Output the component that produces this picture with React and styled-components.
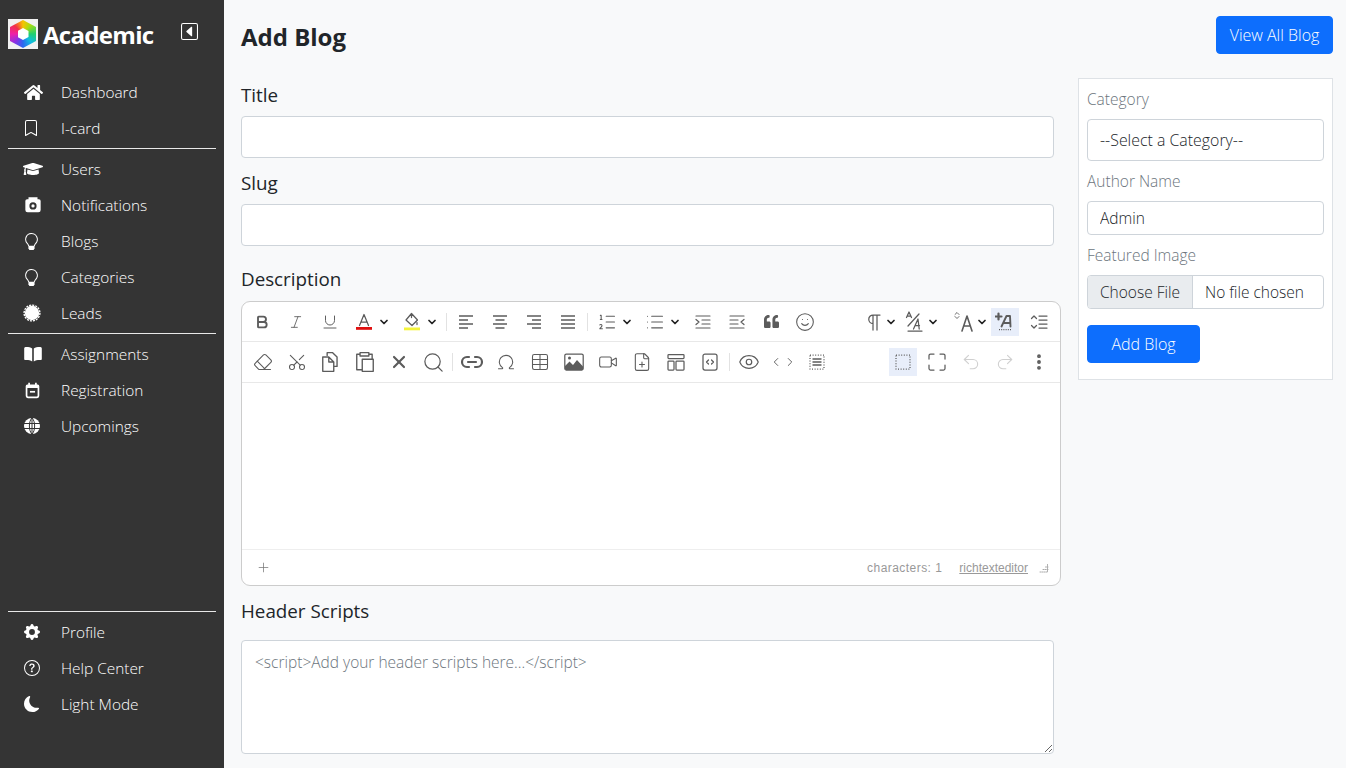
import React from "react";
import styled, { createGlobalStyle } from "styled-components";
import { BsBookmark, BsLightbulb, BsGearFill, BsQuestionCircle, BsMoonFill, BsCaretLeftSquare } from "react-icons/bs";
import { FaGraduationCap, FaQuoteLeft, FaHome } from "react-icons/fa";
import {
  Bold, Italic, Underline, ListOrdered, List, Smile, Eraser, Scissors, X, Search, Link2, Omega, Table, FilePlus, Eye, ChevronLeft, ChevronRight,
  Undo2, Redo2, MoreVertical, ChevronDown, Plus, Video,
} from "lucide-react";

const Global = createGlobalStyle`
  html, body { margin: 0; padding: 0; height: 100%; overflow: hidden; }
  body { background: #f8f9fa; color: #212529; font-family: "Open Sans", "Liberation Sans", sans-serif; }
  * { box-sizing: border-box; }
`;

const Page = styled.div`display: flex; height: 768px; overflow: hidden;`;
const Sidebar = styled.aside`
  width: 224px; flex: none; background: #343434; color: #fff; display: flex; flex-direction: column;
  padding: 0 8px;
`;
const Brand = styled.div`display: flex; align-items: flex-start; height: 74px; padding-top: 19px;`;
const LogoTile = styled.div`width: 30px; height: 30px; flex: none; background: #f1f1f1; position: relative;`;
const LogoHex = styled.div`
  position: absolute; inset: 1px 2px;
  background: conic-gradient(#f6c400 0deg, #a8dc10 40deg, #20cf70 90deg, #10bce0 135deg, #2a68f0 180deg, #8a30e4 225deg, #f01fa8 270deg, #f23048 315deg, #f6c400 360deg);
  clip-path: polygon(50% 0, 100% 25%, 100% 75%, 50% 100%, 0 75%, 0 25%);
`;
const LogoCore = styled.div`
  position: absolute; inset: 9px 9.500px; background: #fff;
  clip-path: polygon(50% 0, 100% 25%, 100% 75%, 50% 100%, 0 75%, 0 25%);
`;
const BrandName = styled.span`font-size: 24px; font-weight: 700; line-height: 32px; margin-left: 5px; letter-spacing: -0.7px;`;
const Collapse = styled.span`margin-left: 28px; margin-top: 4px; display: flex; font-size: 17px;`;
const NavGroup = styled.nav`display: flex; flex-direction: column;`;
const NavItem = styled.div`
  height: 36px; display: flex; align-items: center; padding-left: 15px; font-size: 15.400px; color: #fff; font-weight: 300;
`;
const NavIcon = styled.span`width: 38px; display: flex; align-items: center; font-size: ${(p) => p.$s || 16}px; padding-left: ${(p) => p.$l ?? 1}px;`;
const Rule = styled.hr`margin: 2px 0; border: 0; border-top: 1px solid #e8e8e8; height: 1px; opacity: 1;`;
const Spacer = styled.div`flex: 1;`;
const BottomNav = styled.div`padding-bottom: 46px;`;

const Main = styled.main`flex: 1; min-width: 0; padding: 16px 13px 0 17px;`;
const Header = styled.header`display: flex; justify-content: space-between; align-items: flex-start; height: 62px;`;
const PageTitle = styled.h1`margin: 4px 0 0; font-size: 24px; font-weight: 700; line-height: 34px;`;
const PrimaryButton = styled.button`
  background: #0d6efd; color: #fff; border: 1px solid #0d6efd; border-radius: 4px; height: 38px;
  font: 300 16px "Open Sans", sans-serif; padding: 0; width: ${(p) => p.$w}px;
`;
const Columns = styled.div`display: flex; align-items: flex-start;`;
const FormCol = styled.div`width: 837px; flex: none;`;
const FieldLabel = styled.label`display: block; font-size: 18.800px; line-height: 30px; height: ${(p) => p.$h || 32}px; padding-top: ${(p) => p.$pt || 2}px; color: #212529;`;
const WideInput = styled.input`
  display: block; width: 813px; height: 42px; border: 1px solid #ced4da; border-radius: 4px; background: #fff; margin: 6px 0 8px;
`;
const Editor = styled.div`
  width: 820px; height: 285px; border: 1px solid #ccc; border-radius: 9px; background: #fff; margin-top: 6px;
  display: flex; flex-direction: column; overflow: hidden;
`;
const ToolRow = styled.div`
  height: ${(p) => p.$h}px; flex: none; display: flex; align-items: center; padding: 0 4px 0 ${(p) => p.$pl}px; border-bottom: 1px solid #e8e8e8;
`;
const ToolBtn = styled.span`
  width: 34px; height: 28px; flex: none; display: flex; align-items: center; justify-content: center; color: #5c5c5c; position: relative;
  &::before { content: ""; position: absolute; left: 3px; right: 3px; top: 0; bottom: 0; background: ${(p) => (p.$on ? "#e8eefa" : "transparent")}; }
  & > svg { position: relative; }
`;
const Drop = styled.span`display: flex; align-items: center; flex: none; width: ${(p) => p.$w}px;`;
const Caret = styled(ChevronDown)`margin-left: ${(p) => p.$ml ?? -3}px; color: #222;`;
const UpScissors = styled(Scissors)`transform: rotate(-90deg);`;
const Sep = styled.i`width: 1px; height: 18px; background: #e2e2e2; margin: 0 2px; flex: none;`;
const Push = styled.span`flex: 1;`;
const Canvas = styled.div`flex: 1;`;
const EditorFoot = styled.div`
  height: 36px; flex: none; border-top: 1px solid #eee; display: flex; align-items: center; padding: 0 11px 0 14px;
  font: 12px "Liberation Sans", Arial, sans-serif; color: #999;
`;
const FootCount = styled.span`letter-spacing: 0.45px;`;
const FootLink = styled.span`margin-left: 17px; text-decoration: underline; margin-right: 11px;`;
const ScriptArea = styled.textarea`
  display: block; width: 813px; height: 114px; border: 1px solid #ced4da; border-radius: 4px; background: #fff; padding: 10px 13px; margin-top: 4px;
  font: 300 15.500px "Open Sans", sans-serif; color: #212529;
  &::placeholder { color: #6c757d; opacity: 1; }
`;
const Card = styled.section`
  width: 255px; height: 302px; background: #fff; border: 1px solid #dee2e6; padding: 8px;
  display: flex; flex-direction: column; align-items: flex-start;
`;
const SideLabel = styled.label`font-size: 15.500px; font-weight: 300; color: #6c757d; line-height: 25px; height: 32px;`;
const Select = styled.select`
  appearance: none; width: 237px; height: 42px; border: 1px solid #ced4da; border-radius: 4px; background: #fff; padding: 0 12px;
  font: 300 15.900px "Open Sans", sans-serif; color: #212529; margin-bottom: 8px;
`;
const SideInput = styled.input`
  width: 237px; height: 34px; border: 1px solid #ced4da; border-radius: 4px; background: #fff; padding: 0 12px;
  font: 300 15.500px "Open Sans", sans-serif; color: #212529; margin-bottom: 8px;
`;
const FileInput = styled.input`
  width: 237px; height: 34px; border: 1px solid #ced4da; border-radius: 4px; background: #fff; padding: 0 12px; overflow: hidden;
  font: 300 15.500px "Open Sans", sans-serif; color: #212529; margin-bottom: 16px; line-height: 32px;
  &::file-selector-button {
    height: 32px; margin: -2px 12px 0 -12px; padding: 0; width: 105px; border: 0; border-right: 1px solid #ced4da; background: #e9ecef;
    color: #212529; font: 300 15.500px "Open Sans", sans-serif;
  }
`;

const Logo = () => (
  <LogoTile><LogoHex /><LogoCore /></LogoTile>
);
const CameraBox = () => (
  <svg width="18" height="18" viewBox="0 0 20 20"><path fill="#fff" fillRule="evenodd" d="M5 1.500h10v2h1.500a2 2 0 0 1 2 2v10a2.500 2.500 0 0 1-2.500 2.500H4a2.500 2.500 0 0 1-2.500-2.500v-10a2 2 0 0 1 2-2H5zM10 7a4 4 0 1 0 0 8 4 4 0 0 0 0-8z" /><circle cx="10" cy="11" r="1.800" fill="#fff" /></svg>
);
const Seal = () => (
  <svg width="18" height="18" viewBox="0 0 20 20"><circle cx="10" cy="10" r="8" fill="#fff" /><circle cx="10" cy="10" r="8.800" fill="none" stroke="#fff" strokeWidth="1.500" strokeDasharray="2.300 1.150" /></svg>
);
const CalMinus = () => (
  <svg width="17" height="17" viewBox="0 0 20 20"><path fill="#fff" fillRule="evenodd" d="M5 1h2v2h6V1h2v2h1a2 2 0 0 1 2 2v11a3 3 0 0 1-3 3H5a3 3 0 0 1-3-3V5a2 2 0 0 1 2-2h1zM4 7v9a1 1 0 0 0 1 1h10a1 1 0 0 0 1-1V7z" /><rect x="7" y="10.500" width="6" height="2" fill="#fff" /></svg>
);
const OpenBook = () => (
  <svg width="18" height="16" viewBox="0 0 18 16"><path fill="#fff" d="M8.200 2.500C6.500 1.200 3.500 0.800 1.500 1 .7 1.100.2 1.700.2 2.400V13c0 .7.6 1.200 1.300 1.100 2.200-.2 4.800.2 6.700 1.400zM9.800 2.500c1.700-1.300 4.700-1.700 6.700-1.500.8.100 1.300.7 1.300 1.400V13c0 .7-.6 1.200-1.300 1.100-2.200-.2-4.800.2-6.700 1.400z" /></svg>
);
const GlobeFill = () => (
  <svg width="16" height="16" viewBox="0 0 16 16"><circle cx="8" cy="8" r="8" fill="#fff" /><path fill="none" stroke="#343434" strokeWidth="1" d="M0 5.500h16M0 10.500h16M8 0v16M8 0C4.500 3 4.500 13 8 16M8 0c3.500 3 3.500 13 0 16" /></svg>
);
const S = ({ children, w = 20, h = 20, vb = "0 0 20 20", sw = 1.25, c = "currentColor", ...r }) => (
  <svg width={w} height={h} viewBox={vb} fill="none" stroke={c} strokeWidth={sw} strokeLinecap="round" strokeLinejoin="round" {...r}>{children}</svg>
);
const TextColor = () => (
  <S><path d="M5.500 13.500 10 2.500l4.500 11M7 10h6" /><rect x="2" y="15" width="16" height="2.800" fill="#e01010" stroke="none" /></S>
);
const FillColor = () => (
  <S><path d="M9.500 1.500 15.500 8l-5.500 5.500L4 8zM9.500 1.500v4M15 10.500v2" /><rect x="2" y="15.500" width="16" height="2.800" fill="#f4f43a" stroke="none" /></S>
);
const FontFamily = () => (
  <S><path d="M11 3h7M11 3v15M15 3v15M11 3a4.200 4.200 0 0 0 0 8.500z" /></S>
);
const AlignLines = ({ a = 0, b = 0 }) => (
  <S sw={1.3}>
    <path d={`M3 4h14M${3 + a} 8h${14 - a - b}M3 12h14M${3 + a} 16h${14 - a - b}`} strokeLinecap="butt" />
  </S>
);
const Indent = ({ flip }) => (
  <S sw={1.2} style={flip ? { transform: "scaleX(-1)" } : undefined}>
    <path d="M3 4h14M9 8h8M9 12h8M3 16h14M3 7.500 6 10l-3 2.500" />
  </S>
);
const FontSize = () => (
  <S w={22} h={22} vb="0 0 22 22"><path d="M1.500 6.500 4 1l2.500 5.500M2.500 5h3M3 15 14 3M8.500 18 13 8l1.200 10M10.500 14.500h4M3 20h14" /></S>
);
const Spacing = () => (
  <S w={26} h={24} vb="0 0 26 24" style={{ marginLeft: -1 }}>
    <path d="M3 4.500 5 2.500l2 2M3 6.500l2 2 2-2" strokeWidth="0.900" />
    <path d="M10 21 15 6l5 15M11.800 16h6.400" strokeWidth="1.600" />
  </S>
);
const PlusA = () => (
  <S><path d="M3.500 1.500v6M0.500 4.500h6" strokeWidth="2.200" /><path d="M6.500 14.500 11.500 4H15l.5 10.500M9 11h6" strokeWidth="1.900" /><path d="M4 17.500h13" strokeDasharray="1 1.200" strokeLinecap="butt" /></S>
);
const LineSpace = () => (
  <S><path d="M2.500 6.500 5 4l2.500 2.500M2.500 13.500 5 16l2.500-2.500M10 4h8M10 8h8M10 12h8M10 16h8" /></S>
);
const CopyIco = () => (
  <S w={22} h={22}><path d="M6.500 4V1.500h5l4 4V14H12.500M2.500 5.500h5.500l4.500 4.500v8.500h-10zM8 5.500V10h4.500" /></S>
);
const PasteIco = () => (
  <S w={22} h={22}><path d="M5.500 3H2.500v14H7M13.500 3h3v4M5.500 1.500h8v3h-8zM7.500 7.500H17.500v11H7.500z" /></S>
);
const ImageIco = () => (
  <S><rect x="0.800" y="2" width="18.400" height="16" rx="1.500" /><path d="M1 17v-3l4.500-4.500L9 13l4-5 6 6.500V18H2z" fill="currentColor" stroke="none" /><circle cx="5.500" cy="6" r="1.500" fill="currentColor" stroke="none" /></S>
);
const LayoutIco = () => (
  <S><rect x="2" y="2.500" width="16" height="4" rx="0.800" /><rect x="2" y="9" width="6" height="9" rx="0.800" /><rect x="10" y="9" width="8" height="9" rx="0.800" /></S>
);
const CodeBox = () => (
  <S><rect x="3" y="2" width="14" height="16" rx="2" /><path d="M8.500 8 6.500 10l2 2M11.500 8l2 2-2 2" /></S>
);
const Dotted = ({ inner }) => (
  <S><rect x="3" y="3" width="14" height="14" strokeDasharray="1 1.600" strokeLinecap="butt" />{inner && <path d="M6 7h8M6 10h8M6 13h8" strokeWidth="1.400" />}</S>
);
const Corners = () => (
  <S><path d="M7 2H3.500A1.500 1.500 0 0 0 2 3.500V7M13 2h3.500A1.500 1.500 0 0 1 18 3.500V7M7 18H3.500A1.500 1.500 0 0 1 2 16.500V13M13 18h3.500a1.500 1.500 0 0 0 1.500-1.500V13" /></S>
);
const L = (Comp, p = {}) => <Comp size={20} strokeWidth={1.3} {...p} />;
const caret = (ml) => <Caret size={12} strokeWidth={3.5} $ml={ml} />;

const topNav = [["Dashboard", <FaHome />, 19, 1], ["I-card", <BsBookmark />, 16, 0]];
const midNav = [["Users", <FaGraduationCap />, 20, 0], ["Notifications", <CameraBox />], ["Blogs", <BsLightbulb />, 17, 0], ["Categories", <BsLightbulb />, 17, 0], ["Leads", <Seal />, 18, 0]];
const lowNav = [["Assignments", <OpenBook />], ["Registration", <CalMinus />], ["Upcomings", <GlobeFill />]];
const endNav = [["Profile", <BsGearFill />], ["Help Center", <BsQuestionCircle />], ["Light Mode", <BsMoonFill />]];
const Items = ({ list }) => (
  <NavGroup>{list.map(([t, i, s, l]) => <NavItem key={t}><NavIcon $s={s} $l={l}>{i}</NavIcon>{t}</NavItem>)}</NavGroup>
);

export default function App() {
  return (
    <Page>
      <Global />
      <Sidebar>
        <Brand><Logo /><BrandName>Academic</BrandName><Collapse><BsCaretLeftSquare /></Collapse></Brand>
        <Items list={topNav} />
        <Rule />
        <Items list={midNav} />
        <Rule />
        <Items list={lowNav} />
        <Spacer />
        <BottomNav>
          <Rule />
          <Items list={endNav} />
        </BottomNav>
      </Sidebar>
      <Main>
        <Header>
          <PageTitle>Add Blog</PageTitle>
          <PrimaryButton $w={117}>View All Blog</PrimaryButton>
        </Header>
        <Columns>
          <FormCol>
            <FieldLabel>Title</FieldLabel>
            <WideInput />
            <FieldLabel>Slug</FieldLabel>
            <WideInput />
            <FieldLabel $h={41} $pt={10}>Description</FieldLabel>
            <Editor>
              <ToolRow $h={40} $pl={3}>
                <ToolBtn>{L(Bold, { strokeWidth: 2.8, size: 16 })}</ToolBtn>
                <ToolBtn>{L(Italic, { size: 16 })}</ToolBtn>
                <ToolBtn>{L(Underline, { size: 18 })}</ToolBtn>
                <Drop $w={48}><ToolBtn><TextColor /></ToolBtn>{caret()}</Drop>
                <Drop $w={49}><ToolBtn><FillColor /></ToolBtn>{caret()}</Drop>
                <Sep />
                <ToolBtn><AlignLines b={5} /></ToolBtn>
                <ToolBtn><AlignLines a={2.5} b={2.5} /></ToolBtn>
                <ToolBtn><AlignLines a={5} /></ToolBtn>
                <ToolBtn><AlignLines /></ToolBtn>
                <Sep />
                <Drop $w={48}><ToolBtn>{L(ListOrdered)}</ToolBtn>{caret()}</Drop>
                <Drop $w={48}><ToolBtn>{L(List)}</ToolBtn>{caret()}</Drop>
                <ToolBtn><Indent /></ToolBtn>
                <ToolBtn><Indent flip /></ToolBtn>
                <ToolBtn><FaQuoteLeft size={15} /></ToolBtn>
                <ToolBtn>{L(Smile)}</ToolBtn>
                <Push />
                <Drop $w={44}><ToolBtn><FontFamily /></ToolBtn>{caret(-4)}</Drop>
                <Drop $w={49}><ToolBtn><FontSize /></ToolBtn>{caret(-6)}</Drop>
                <Drop $w={40}><ToolBtn><Spacing /></ToolBtn>{caret(-6)}</Drop>
                <ToolBtn $on><PlusA /></ToolBtn>
                <ToolBtn><LineSpace /></ToolBtn>
              </ToolRow>
              <ToolRow $h={41} $pl={4}>
                <ToolBtn>{L(Eraser)}</ToolBtn>
                <ToolBtn>{L(UpScissors)}</ToolBtn>
                <ToolBtn><CopyIco /></ToolBtn>
                <ToolBtn><PasteIco /></ToolBtn>
                <ToolBtn>{L(X, { strokeWidth: 2.6 })}</ToolBtn>
                <ToolBtn>{L(Search, { size: 23 })}</ToolBtn>
                <Sep />
                <ToolBtn>{L(Link2, { strokeWidth: 2.2, size: 24 })}</ToolBtn>
                <ToolBtn>{L(Omega)}</ToolBtn>
                <ToolBtn>{L(Table)}</ToolBtn>
                <ToolBtn><ImageIco /></ToolBtn>
                <ToolBtn>{L(Video)}</ToolBtn>
                <ToolBtn>{L(FilePlus)}</ToolBtn>
                <ToolBtn><LayoutIco /></ToolBtn>
                <ToolBtn><CodeBox /></ToolBtn>
                <Sep />
                <ToolBtn>{L(Eye, { size: 22 })}</ToolBtn>
                <ToolBtn><ChevronLeft size={14} strokeWidth={1.6} /><ChevronRight size={14} strokeWidth={1.6} /></ToolBtn>
                <ToolBtn><Dotted inner /></ToolBtn>
                <Push />
                <ToolBtn $on><Dotted /></ToolBtn>
                <ToolBtn><Corners /></ToolBtn>
                <ToolBtn>{L(Undo2, { color: "#d0d0d0" })}</ToolBtn>
                <ToolBtn>{L(Redo2, { color: "#d0d0d0" })}</ToolBtn>
                <ToolBtn>{L(MoreVertical, { strokeWidth: 2.6 })}</ToolBtn>
              </ToolRow>
              <Canvas />
              <EditorFoot>
                <Plus size={15} strokeWidth={1.2} color="#777" />
                <Push />
                <FootCount>characters: 1</FootCount>
                <FootLink>richtexteditor</FootLink>
                <S w={10} h={10} vb="0 0 10 10" c="#aaa" sw={1}><path d="M1 9h8M4 6.500h5M6.500 4h2.500M8.500 1.500v7.500" strokeDasharray="1 1" /></S>
              </EditorFoot>
            </Editor>
            <FieldLabel $h={50} $pt={10}>Header Scripts</FieldLabel>
            <ScriptArea placeholder="<script>Add your header scripts here...</script>" />
          </FormCol>
          <Card>
            <SideLabel>Category</SideLabel>
            <Select><option>--Select a Category--</option></Select>
            <SideLabel>Author Name</SideLabel>
            <SideInput defaultValue="Admin" />
            <SideLabel>Featured Image</SideLabel>
            <FileInput type="file" />
            <PrimaryButton $w={113}>Add Blog</PrimaryButton>
          </Card>
        </Columns>
      </Main>
    </Page>
  );
}
